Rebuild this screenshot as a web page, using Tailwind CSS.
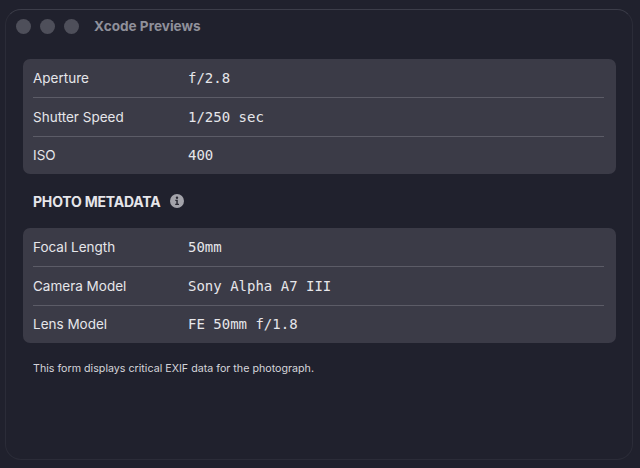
<!DOCTYPE html>
<html lang="en">
<head>
    <meta charset="UTF-8">
    <meta name="viewport" content="width=device-width, initial-scale=1.0">
    <title>Xcode Previews</title>
    <script src="https://cdn.jsdelivr.net/npm/@tailwindcss/browser@4"></script>
</head>
<body class="bg-[#20212d] w-[640px] h-[468px] overflow-hidden font-['Inter',sans-serif]">
    <div class="ml-[5px] mt-[9px] w-[628px] h-[451px] rounded-[16px] border border-[#2b2c38] border-t-[#3c3d49] bg-[#20212d]">
        <!-- Title bar -->
        <div class="h-[32px] pl-[10px] flex items-center">
            <div class="flex gap-[9px]">
                <span class="w-[15px] h-[15px] rounded-full bg-[#4e4f5a]"></span>
                <span class="w-[15px] h-[15px] rounded-full bg-[#4e4f5a]"></span>
                <span class="w-[15px] h-[15px] rounded-full bg-[#4e4f5a]"></span>
            </div>
            <span class="ml-[15px] text-[13.6px] font-bold text-[#8f909a]">Xcode Previews</span>
        </div>

        <div class="pl-[17px] pr-[16px] pt-[17px]">
            <!-- Exposure -->
            <div class="bg-[#3b3b47] rounded-[7px] pl-[10px] pr-[12px] h-[115px] flex flex-col">
                <div class="h-[39px] flex items-center border-b border-[#5c5c67]">
                    <span class="w-[155px] text-[13.5px] text-[#e6e6ea]">Aperture</span>
                    <span class="font-['DejaVu_Sans_Mono',monospace] text-[14px] text-[#e6e6ea]">f/2.8</span>
                </div>
                <div class="h-[39px] flex items-center border-b border-[#5c5c67]">
                    <span class="w-[155px] text-[13.5px] text-[#e6e6ea]">Shutter Speed</span>
                    <span class="font-['DejaVu_Sans_Mono',monospace] text-[14px] text-[#e6e6ea]">1/250 sec</span>
                </div>
                <div class="h-[37px] flex items-center">
                    <span class="w-[155px] text-[13.5px] text-[#e6e6ea]">ISO</span>
                    <span class="font-['DejaVu_Sans_Mono',monospace] text-[14px] text-[#e6e6ea]">400</span>
                </div>
            </div>

            <!-- Section header -->
            <div class="h-[54px] pl-[10px] flex items-center">
                <span class="text-[14px] font-bold text-[#e6e6ea] tracking-[-0.2px]">PHOTO METADATA</span>
                <svg class="ml-[10px]" width="14" height="14" viewBox="0 0 14 14">
                    <circle cx="7" cy="7" r="7" fill="#a3a3aa"/>
                    <circle cx="7" cy="3.7" r="1.2" fill="#2b2b35"/>
                    <path d="M5.3 5.8H7.8V9.8H9V11H5.2V9.8H6.3V7H5.3Z" fill="#2b2b35"/>
                </svg>
            </div>

            <!-- Metadata -->
            <div class="bg-[#3b3b47] rounded-[7px] pl-[10px] pr-[12px] h-[115px] flex flex-col">
                <div class="h-[39px] flex items-center border-b border-[#5c5c67]">
                    <span class="w-[155px] text-[13.5px] text-[#e6e6ea]">Focal Length</span>
                    <span class="font-['DejaVu_Sans_Mono',monospace] text-[14px] text-[#e6e6ea]">50mm</span>
                </div>
                <div class="h-[39px] flex items-center border-b border-[#5c5c67]">
                    <span class="w-[155px] text-[13.5px] text-[#e6e6ea]">Camera Model</span>
                    <span class="font-['DejaVu_Sans_Mono',monospace] text-[14px] text-[#e6e6ea]">Sony Alpha A7 III</span>
                </div>
                <div class="h-[37px] flex items-center">
                    <span class="w-[155px] text-[13.5px] text-[#e6e6ea]">Lens Model</span>
                    <span class="font-['DejaVu_Sans_Mono',monospace] text-[14px] text-[#e6e6ea]">FE 50mm f/1.8</span>
                </div>
            </div>

            <p class="pl-[10px] mt-[19px] text-[10.7px] leading-[14px] text-[#d4d4da]">This form displays critical EXIF data for the photograph.</p>
        </div>
    </div>
</body>
</html>
